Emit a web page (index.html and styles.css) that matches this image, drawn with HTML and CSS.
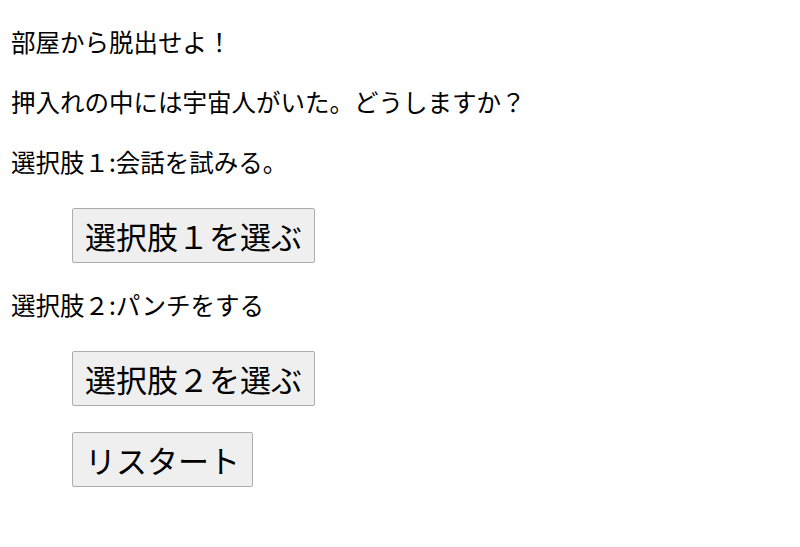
FILE: index.html
```html
<!DOCTYPE html>
<html lang="ja">
<head>
  <meta charset="UTF-8" />
  <meta name="viewport" content="width=device-width, initial-scale=1.0" />
  <title>部屋から脱出せよ！</title>
  <link rel="stylesheet" href="styles.css">
</head>
<body>
  <p id="title">部屋から脱出せよ！</p>
  <p id="story">押入れの中には宇宙人がいた。どうしますか？</p>

  <p id="choice1Text">選択肢１:会話を試みる。</p>
  <div class="choice">
    <button id="choice1Btn">選択肢１を選ぶ</button>
  </div>

  <p id="choice2Text">選択肢２:パンチをする</p>
  <div class="choice">
    <button id="choice2Btn">選択肢２を選ぶ</button>
  </div>

  <div class="choice restart">
    <button id="restartBtn">リスタート</button>
  </div>
</body>
</html>
```

FILE: styles.css
```css
body {
  font-family: Meiryo, "Noto Sans CJK JP", "Noto Sans", sans-serif;
  color: #000;
  background-color: #fff;
  margin: 0 8px 8px 11px;
}

p {
  font-size: 24.5px;
  line-height: 36px;
  margin: 24px 0;
}

.choice {
  margin: 28px 0 24px 61px;
}

.choice.restart {
  margin-top: 26px;
}

button {
  font-family: inherit;
  font-size: 31px;
  line-height: 45px;
  padding: 4px 12px;
  color: #000;
  background-color: #efefef;
  border: 1px solid #adadad;
  border-radius: 2px;
  cursor: pointer;
}
```
